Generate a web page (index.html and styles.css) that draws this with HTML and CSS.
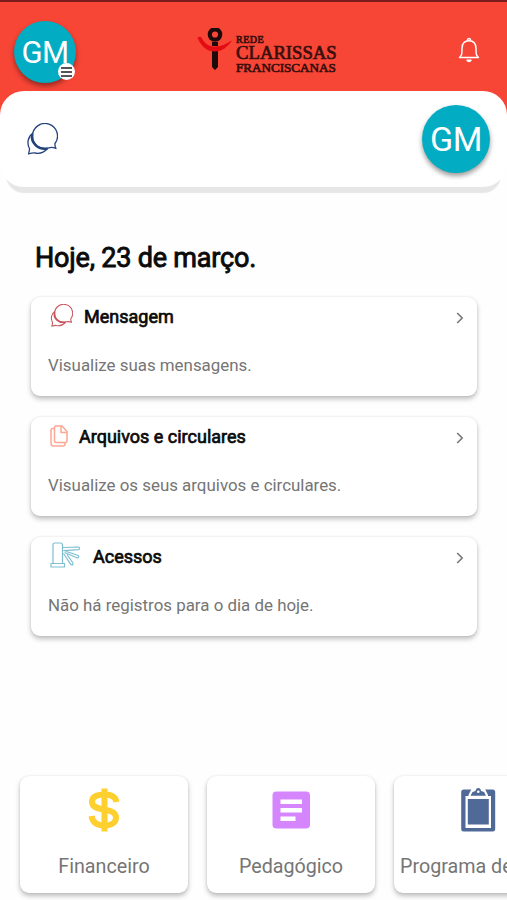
FILE: index.html
```html
<!DOCTYPE html>
<html lang="pt-BR">
<head>
  <meta charset="UTF-8" />
  <meta name="viewport" content="width=device-width, initial-scale=1" />
  <title>Rede Clarissas Franciscanas</title>
  <link rel="stylesheet" href="styles.css">
</head>
<body>
  <!-- shared icon -->
  <svg class="defs">
    <symbol id="chat" viewBox="0 0 32 32">
      <path d="M29 20.500A12.500 12.500 0 1 0 23 24.840C25.500 24 27.500 24.500 30 25.500C29 23.500 28.700 22 29 20.500Z" />
      <path d="M7 10C2 13.500 .5 20 3.500 25.500C3.700 27.500 3 29.500 2.500 31C4.500 30.200 6.500 29.700 8.500 29.800C13 31 18 29.500 21.500 25.500" />
      <path class="thick" d="M6.300 11.500C4.500 19.500 11.500 27 21.500 25.500" />
    </symbol>
  </svg>

  <header class="topbar">
    <div class="avatar avatar-menu">GM
      <span class="menu-badge"><i></i><i></i><i></i></span>
    </div>
    <div class="brand">
      <svg class="brand-mark" viewBox="0 0 36 44">
        <circle cx="18" cy="6.500" r="5.200" fill="none" stroke="#1c0b0a" stroke-width="4.200" />
        <path d="M15 14h6v4h-6zM15 23h6v16l-3 3-3-3z" fill="#1c0b0a" />
        <path d="M.5 10C2 8 4 8.500 5 10.500C8 16 12 18.500 18 18.500C25 18.500 29 15.500 35 12.500C30 19.500 25 23.500 18 23.500C9 23.500 4 17.500 .5 10Z" fill="#e30c12" />
      </svg>
      <div class="brand-text">
        <span class="line-sm">REDE</span>
        <span class="line-lg">CLARISSAS</span>
        <span class="line-md">FRANCISCANAS</span>
      </div>
    </div>
    <svg class="bell" viewBox="0 0 22 26">
      <path d="M1.500 20.500C4 18.500 4 16.500 4 11.500C4 6.500 6.500 3.700 11 3.700S18 6.500 18 11.500C18 16.500 18 18.500 20.500 20.500Z" />
      <path d="M9.500 3.500C9.500 .7 12.500 .7 12.500 3.500M9 23.200C9.800 25 12.200 25 13 23.200Z" />
    </svg>
  </header>

  <section class="profile-wrap">
    <div class="profile">
      <svg class="chat-main"><use href="#chat" /></svg>
      <div class="avatar avatar-profile">GM</div>
    </div>
  </section>

  <main>
    <h1>Hoje, 23 de março.</h1>

    <div class="card">
      <div class="card-head">
        <svg class="icon-msg"><use href="#chat" /></svg>
        <h2>Mensagem</h2>
        <svg class="chevron" viewBox="0 0 8 12"><path d="M1.200 1l5 5-5 5" /></svg>
      </div>
      <p>Visualize suas mensagens.</p>
    </div>

    <div class="card">
      <div class="card-head">
        <svg class="icon-files" viewBox="0 0 18 22">
          <path d="M6 1h6l5 5.500v9.500q0 1.500-1.500 1.500h-9.500q-1.500 0-1.500-1.500v-13.500q0-1.500 1.500-1.500zM11 1v6.500h6" />
          <path d="M4.500 3.500h-1.500q-2 0-2 2v13q0 2.500 2.500 2.500h9.500q2 0 2-2v-1.500" />
        </svg>
        <h2>Arquivos e circulares</h2>
        <svg class="chevron" viewBox="0 0 8 12"><path d="M1.200 1l5 5-5 5" /></svg>
      </div>
      <p>Visualize os seus arquivos e circulares.</p>
    </div>

    <div class="card">
      <div class="card-head">
        <svg class="icon-access" viewBox="0 0 31 26">
          <path d="M3 21V3q0-2 2-2h5.500q2 0 2 2v18M1 21.500h13.500v3.500h-13.500z" />
          <path d="M13 5.500l15.500-.5q2 1 .3 2.700l-15.300 1M15 9l13.200 4.500q1.300 1.800-.7 2.500l-13-5.500M17 12.500l6 8.500q.3 2.500-2 1.800l-7.500-11.300" />
        </svg>
        <h2>Acessos</h2>
        <svg class="chevron" viewBox="0 0 8 12"><path d="M1.200 1l5 5-5 5" /></svg>
      </div>
      <p>Não há registros para o dia de hoje.</p>
    </div>
  </main>

  <!-- shortcuts, scrolls sideways -->
  <nav class="tiles">
    <div class="tile">
      <svg class="tile-icon" viewBox="0 0 44 44">
        <path d="M34.500 14C33.500 8.500 29.500 6.500 22.500 6.500C13.500 6.500 10 9.500 10 14C10 24.500 34 18.500 34 29.500C34 34.500 29.500 37.500 22.500 37.500C14.500 37.500 10.500 34 9.500 28" fill="none" stroke="#fdd02f" stroke-width="6" />
        <path d="M19.500 .5h6v43h-6z" fill="#fdd02f" />
      </svg>
      <span>Financeiro</span>
    </div>
    <div class="tile">
      <svg class="tile-icon" viewBox="0 0 44 44">
        <rect x="3.500" y="3.500" width="37.500" height="37" rx="4" fill="#d586ff" />
        <path d="M11.500 11.500h21.500v4.500h-21.500zM11.500 20h21.500v4.500h-21.500zM11.500 28.500h15v4.500h-15z" fill="#fff" />
      </svg>
      <span>Pedagógico</span>
    </div>
    <div class="tile tile-long">
      <svg class="tile-icon" viewBox="0 0 44 44">
        <rect x="5.200" y="1.500" width="34" height="42" rx="2.500" fill="#506a97" />
        <path d="M9.500 8h25.500v32h-25.500z" fill="#fff" />
        <path d="M11.800 11h21v25.500h-21z" fill="#506a97" />
        <path d="M12.500 9V7L15.500 1H29L32 7V9z" fill="#fff" />
        <path d="M14.500 7.700L16.500 4L19.500 3Q20 0 22.300 0T25.100 3L28.100 4L30 7.700z" fill="#506a97" />
        <circle cx="22.300" cy="3.800" r="1.300" fill="#fff" />
      </svg>
      <span>Programa de</span>
    </div>
  </nav>
</body>
</html>
```
FILE: styles.css
```css
* {
  box-sizing: border-box;
}
body {
  margin: 0;
  height: 900px;
  overflow: hidden;
  background: #fefefe;
  font-family: Roboto, "Liberation Sans", sans-serif;
  color: #0b0b0b;
}
svg {
  display: block;
  flex: none;
  fill: none;
  stroke-linejoin: round;
}
.defs {
  position: absolute;
  width: 0;
  height: 0;
}
.thick {
  stroke-width: 2.4;
}

/* Header */
.topbar {
  display: flex;
  align-items: flex-start;
  height: 91px;
  padding: 19px 27px 0 14px;
  border-top: 2px solid #7a1d1c;
  background: #f74536;
}
.avatar {
  display: flex;
  align-items: center;
  justify-content: center;
  border-radius: 50%;
  background: #02acc2;
  color: #fff;
  letter-spacing: -0.500px;
}
.avatar-menu {
  position: relative;
  width: 62px;
  height: 62px;
  font-size: 31px;
  box-shadow: 0 3px 5px rgba(0, 0, 0, 0.4);
}
.menu-badge {
  position: absolute;
  right: 1px;
  bottom: 3px;
  display: flex;
  flex-direction: column;
  justify-content: center;
  gap: 2px;
  width: 17px;
  height: 17px;
  padding: 0 3px;
  border-radius: 50%;
  background: #fff;
}
.menu-badge i {
  height: 2px;
  background: #555;
}
.brand {
  display: flex;
  margin: 7px auto 0 121px;
}
.brand-mark {
  width: 36px;
  height: 44px;
}
.brand-text {
  display: flex;
  flex-direction: column;
  margin: 6px 0 0 3px;
  font-family: "Liberation Serif", serif;
  color: #380f0d;
  -webkit-text-stroke: 0.7px #380f0d;
  white-space: nowrap;
}
.line-sm {
  font-size: 10px;
  line-height: 12px;
  letter-spacing: 0.5px;
}
.line-lg {
  font-size: 18.700px;
  line-height: 14px;
}
.line-md {
  font-size: 13.100px;
  line-height: 16px;
}
.bell {
  width: 22px;
  height: 26px;
  margin-top: 16px;
  stroke: #fff;
  stroke-width: 1.500;
}

/* Profile strip */
.profile-wrap {
  background: linear-gradient(#f74536 36px, #fefefe 36px);
}
.profile {
  display: flex;
  justify-content: space-between;
  align-items: center;
  height: 96px;
  padding: 0 17px 0 26px;
  border-radius: 24px;
  background: #fff;
  box-shadow: 0 12px 1px -6px #e6e6e6;
}
.chat-main {
  width: 32px;
  height: 32px;
  stroke: #24427c;
  stroke-width: 1.300;
}
.avatar-profile {
  width: 68px;
  height: 68px;
  font-size: 34px;
  box-shadow: 0 3px 5px rgba(0, 0, 0, 0.4);
}

/* Daily cards */
main {
  padding: 0 30px 0 31px;
}
h1 {
  margin: 53px 0 21px 4px;
  font-size: 27px;
  line-height: 36px;
  font-weight: 400;
  letter-spacing: -0.2px;
  -webkit-text-stroke: 0.9px #0b0b0b;
}
.card {
  height: 99px;
  margin-bottom: 21px;
  padding: 5px 13px 0 17px;
  border-radius: 9px;
  background: #fff;
  box-shadow: 0 3px 5px rgba(0, 0, 0, 0.25), 0 0 2px rgba(0, 0, 0, 0.1);
}
.card-head {
  display: flex;
  align-items: center;
  height: 28px;
}
h2 {
  flex: 1;
  margin: 0;
  font-size: 18px;
  font-weight: 400;
  -webkit-text-stroke: 0.7px #0b0b0b;
}
.card p {
  margin: 23px 0 0;
  font-size: 16.900px;
  line-height: 24px;
  color: #757575;
}
.chevron {
  width: 8px;
  height: 12px;
  margin-top: 3px;
  stroke: #777;
  stroke-width: 1.700;
}
.icon-msg {
  width: 23px;
  height: 23px;
  margin: 0 11px 1px 2px;
  stroke: #c9595e;
  stroke-width: 1.500;
}
.icon-files {
  width: 18px;
  height: 22px;
  margin: 0 11px 0 2px;
  stroke: #fba894;
  stroke-width: 1.500;
}
.icon-access {
  width: 31px;
  height: 26px;
  margin: 0 12px 2px 2px;
  stroke: #7dbfd0;
  stroke-width: 1.200;
}

/* Bottom shortcuts */
.tiles {
  display: flex;
  gap: 19px;
  margin-top: 130px;
  padding: 10px 0 7px 20px;
  overflow: hidden;
}
.tile {
  display: flex;
  flex: none;
  flex-direction: column;
  align-items: center;
  width: 168px;
  height: 117px;
  padding-top: 12px;
  border-radius: 9px;
  background: #fff;
  box-shadow: 0 3px 5px rgba(0, 0, 0, 0.25), 0 0 2px rgba(0, 0, 0, 0.1);
}
.tile-icon {
  width: 44px;
  height: 44px;
  overflow: visible;
}
.tile span {
  margin-top: 22px;
  font-size: 19.700px;
  line-height: 26px;
  color: #757575;
  white-space: nowrap;
}
.tile-long span {
  align-self: flex-start;
  padding-left: 6px;
}
```
